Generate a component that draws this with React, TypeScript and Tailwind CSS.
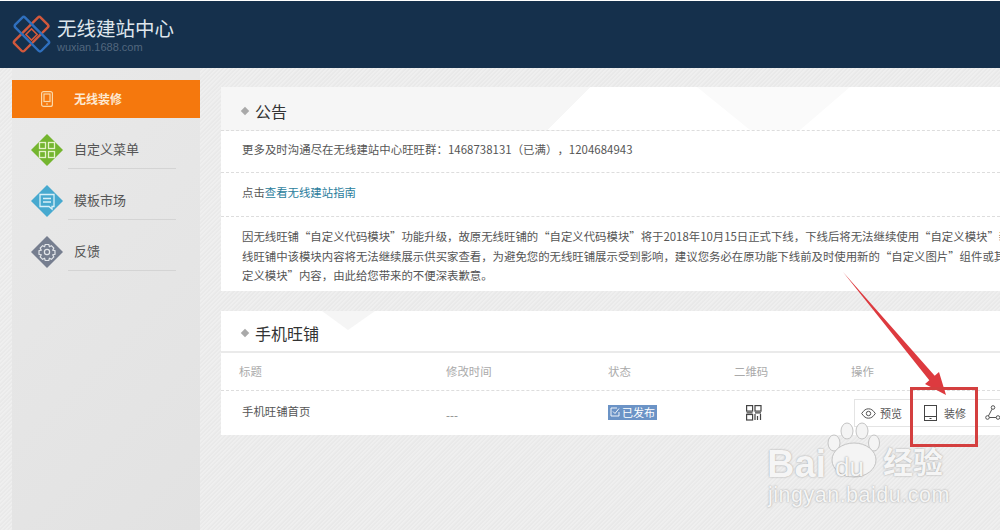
const font = "[font-family:'Noto_Sans_CJK_SC','Liberation_Sans',sans-serif] [text-spacing-trim:space-all]";

function Diamond({ color, children }: { color: string; children: React.ReactNode }) {
  return (
    <svg width="32" height="32" viewBox="0 0 32 32" className="mb-[3px] shrink-0">
      <polygon points="16,0 32,16 16,32 0,16" fill={color} />
      {children}
    </svg>
  );
}

function MenuItem({ label, icon }: { label: string; icon: React.ReactNode }) {
  return (
    <div className="flex h-[51px] items-end pl-[31px]">
      {icon}
      <div className="ml-[5px] flex h-[51px] w-[108px] items-end border-b border-[#d4d4d4] pb-[10px] pl-[6px] text-[13px] leading-[19px] text-[#555]">
        {label}
      </div>
    </div>
  );
}

function CardTitle({ title, className, children }: { title: string; className: string; children?: React.ReactNode }) {
  return (
    <div className={`relative flex items-center pl-[21px] pt-[4px] ${className}`}>
      {children}
      <span className="relative mr-[7px] h-[6px] w-[6px] rotate-45 bg-[#a9a9a9]" />
      <span className="relative text-[16px] leading-[22px] text-[#333]">{title}</span>
    </div>
  );
}

export default function App() {
  return (
    <div className={`relative h-[530px] w-[1000px] overflow-hidden bg-[#ececec] bg-[repeating-linear-gradient(135deg,#efefef_0px,#efefef_1px,#e9e9e9_2px,#e9e9e9_3px)] ${font}`}>
      <div className="h-[1px] bg-white" />
      <header className="flex h-[67px] items-center bg-[#15304c] pl-[11px]">
        <svg width="41" height="41" viewBox="0 0 41 41" fill="none" strokeWidth="2.4">
          <rect x="2" y="13" width="37" height="14" rx="2" transform="rotate(-45 20.5 20.5)" stroke="#d2583c" />
          <rect x="2" y="13" width="37" height="14" rx="2" transform="rotate(45 20.5 20.5)" stroke="#2f6fbd" />
          <rect x="16.5" y="16.5" width="8" height="8" transform="rotate(45 20.5 20.5)" stroke="#d2583c" strokeWidth="1.6" />
        </svg>
        <div className="ml-[5px] mt-[1px]">
          <div className="text-[19.5px] leading-[24px] text-[#dfe6ec] [font-family:'Liberation_Sans','Noto_Sans_CJK_SC',sans-serif]">无线建站中心</div>
          <div className="text-[11px] leading-[12px] text-[#52677e] [font-family:'Liberation_Sans',sans-serif]">wuxian.1688.com</div>
        </div>
      </header>

      <div className="flex h-[462px]">
        <aside className="ml-[12px] h-full w-[188px] shrink-0 bg-[linear-gradient(135deg,#e9e9e9,#e2e2e2)] pt-[12px]">
          <div className="flex h-[38px] items-center bg-[#f5780d] pl-[29px]">
            <svg width="12" height="16" viewBox="0 0 12 16" fill="none" stroke="#fbd9a8" strokeWidth="1.2">
              <rect x="0.6" y="0.6" width="10.8" height="14.8" rx="2" />
              <rect x="3" y="3" width="6" height="7.5" />
              <path d="M5 13h2" />
            </svg>
            <span className="ml-[21px] text-[12px] font-bold text-[#fde9d2]">无线装修</span>
          </div>
          <div className="-ml-[12px]">
            <MenuItem
              label="自定义菜单"
              icon={
                <Diamond color="#74b52f">
                  <g fill="none" stroke="#e4f2c8" strokeWidth="1.3">
                    <rect x="8.5" y="8.5" width="6" height="6" />
                    <rect x="17.5" y="8.5" width="6" height="6" />
                    <rect x="8.5" y="17.5" width="6" height="6" />
                    <rect x="17.5" y="17.5" width="6" height="6" />
                  </g>
                </Diamond>
              }
            />
            <MenuItem
              label="模板市场"
              icon={
                <Diamond color="#47a9cf">
                  <g fill="none" stroke="#d8f0f8" strokeWidth="1.3">
                    <path d="M9 9.5h14v12h-2v2.5l-3-2.5H9z" />
                    <path d="M12 13.5h8M12 17h8" />
                  </g>
                </Diamond>
              }
            />
            <MenuItem
              label="反馈"
              icon={
                <Diamond color="#767e8f">
                  <g fill="none" stroke="#e3e6ea" strokeWidth="1.2">
                    <circle cx="16" cy="16" r="2.6" />
                    <path d="M14.2 8.5h3.6l.6 2.2 2-1 2.4 2.4-1 2 2.2.6v3.6l-2.2.6 1 2-2.4 2.4-2-1-.6 2.2h-3.6l-.6-2.2-2 1-2.4-2.4 1-2-2.2-.6v-3.6l2.2-.6-1-2 2.4-2.4 2 1z" />
                  </g>
                </Diamond>
              }
            />
          </div>
        </aside>

        <main className="ml-[21px] min-w-0 flex-1 pt-[19px]">
          <section className="h-[204px] overflow-hidden bg-white text-[11.4px] text-[#555]">
            <CardTitle title="公告" className="h-[44px] border-b border-dashed border-[#ddd] bg-[linear-gradient(135deg,#f6f6f6_261px,#fff_261px)]">
              {/* 背景三角 */}
              <svg width="153" height="43" viewBox="0 0 153 43" className="absolute left-[476px] top-0">
                <polygon points="0,0 153,0 103,43 53,43" fill="#fafafa" />
              </svg>
            </CardTitle>
            <div className="flex h-[42px] items-center border-b border-dashed border-[#ddd] pb-[4px] pl-[21px] tracking-[0.05px]">
              更多及时沟通尽在无线建站中心旺旺群：1468738131（已满），1204684943
            </div>
            <div className="flex h-[44px] items-center border-b border-dashed border-[#ddd] pb-[3px] pl-[21px]">
              点击<span className="text-[#2a7d9c]">查看无线建站指南</span>
            </div>
            <div className="whitespace-nowrap pl-[21px] pt-[10px] leading-[19.5px]">
              <div>因无线旺铺“自定义代码模块”功能升级，故原无线旺铺的“自定义代码模块”将于2018年10月15日正式下线，下线后将无法继续使用“自定义模块”装</div>
              <div>线旺铺中该模块内容将无法继续展示供买家查看，为避免您的无线旺铺展示受到影响，建议您务必在原功能下线前及时使用新的“自定义图片”组件或其</div>
              <div>定义模块”内容，由此给您带来的不便深表歉意。</div>
            </div>
          </section>

          <section className="mt-[20px] h-[124px] overflow-hidden bg-white text-[11.4px]">
            <CardTitle title="手机旺铺" className="h-[42px] border-b-2 border-[#eaeaea]">
              <svg width="53" height="19" viewBox="0 0 53 19" className="absolute left-[101px] top-0">
                <polygon points="0,0 53,0 26,19" fill="#f5f5f5" />
              </svg>
            </CardTitle>
            <div className="flex h-[38px] items-center border-b border-dashed border-[#ddd] pt-[1px] text-[#aaa]">
              <div className="w-[225px] pl-[18px]">标题</div>
              <div className="w-[162px]">修改时间</div>
              <div className="w-[126px]">状态</div>
              <div className="w-[117px]">二维码</div>
              <div>操作</div>
            </div>
            <div className="flex h-[44px] items-center text-[#555]">
              <div className="w-[225px] pb-[3px] pl-[21px]">手机旺铺首页</div>
              <div className="w-[162px] pt-[6px] text-[#888]">---</div>
              <div className="w-[126px]">
                <span className="inline-flex h-[15px] w-[49px] items-center justify-center gap-[2px] bg-[#6b93c6] text-[11px] text-white">
                  <svg width="10" height="10" viewBox="0 0 10 10" fill="none" stroke="#fff" strokeWidth="0.9">
                    <path d="M9 5v4H1V1h6M3 4.5l2 2 4-5" />
                  </svg>
                  已发布
                </span>
              </div>
              <div className="w-[120px] pl-[12px]">
                <svg width="16" height="16" viewBox="0 0 16 16" fill="none" stroke="#444" strokeWidth="1.2">
                  <rect x="0.6" y="0.6" width="6" height="5.5" />
                  <rect x="9" y="0.6" width="6" height="5.5" />
                  <rect x="0.6" y="9.5" width="6" height="5.5" />
                  <path d="M9 9v6M11.5 11v4M14.5 9v6M0.6 7.8h6M9 7.8h6" />
                </svg>
              </div>
              <div className="flex h-[28px] flex-1 items-center border-y border-l border-[#e4e4e4] pl-[6px] text-[11px] text-[#555]">
                <svg width="15" height="11" viewBox="0 0 15 11" fill="none" stroke="#555" strokeWidth="1" className="shrink-0">
                  <path d="M0.7 5.5C3 2 5 .8 7.5.8S12 2 14.3 5.5C12 9 10 10.2 7.5 10.2S3 9 .7 5.5z" />
                  <circle cx="7.5" cy="5.5" r="2.2" />
                </svg>
                <span className="ml-[4px] shrink-0">预览</span>
                <svg width="13" height="16" viewBox="0 0 13 16" fill="none" stroke="#444" strokeWidth="1" className="ml-[22px] shrink-0">
                  <rect x="0.5" y="0.5" width="12" height="15" />
                  <path d="M0.5 11.5h12M5.5 13.5h2" />
                </svg>
                <span className="ml-[7px] shrink-0">装修</span>
                <svg width="15" height="16" viewBox="0 0 15 16" fill="none" stroke="#555" strokeWidth="1" className="ml-[19px] shrink-0">
                  <circle cx="8" cy="2.5" r="1.8" />
                  <circle cx="2.5" cy="12.5" r="1.8" />
                  <circle cx="13" cy="12.5" r="1.8" />
                  <path d="M7 4.2 3.4 11M4.3 12.5h6.9" />
                </svg>
              </div>
            </div>
          </section>
        </main>
      </div>

      {/* 红色标注 */}
      <svg width="150" height="190" viewBox="0 0 150 190" fill="none" className="absolute left-[835px] top-[265px]">
        <polygon points="8,7 99.7,110.8 104,107 111,130 90,119 94.3,115.2" fill="#dd3a3f" />
      </svg>
      <div className="absolute left-[910px] top-[387px] h-[60px] w-[68px] border-[3px] border-[#d43f3f]" />

      {/* 水印 */}
      <svg width="56" height="58" viewBox="0 0 56 58" className="absolute left-[826px] top-[422px]" fill="#f4f4f4" stroke="#c4c4c4">
        <ellipse cx="8" cy="21" rx="6" ry="8" />
        <ellipse cx="21" cy="9" rx="6" ry="8" />
        <ellipse cx="36" cy="9" rx="6" ry="8" />
        <ellipse cx="48" cy="21" rx="5.5" ry="8" />
        <ellipse cx="28" cy="38" rx="22" ry="17" />
      </svg>
      <div className="absolute left-[767px] top-[447px] [font-family:'Liberation_Sans'] text-[38px] font-bold leading-[34px] text-[#f5f5f5] [text-shadow:0_0_2px_#999]">
        Bai
      </div>
      <div className="absolute left-[835px] top-[452px] [font-family:'Liberation_Sans'] text-[26px] leading-[30px] text-[#f5f5f5] [text-shadow:0_0_2px_#888]">
        du
      </div>
      <div className="absolute left-[883px] top-[446px] [font-family:'Liberation_Sans','Noto_Sans_CJK_SC'] text-[30px] font-bold leading-[34px] text-[#f5f5f5] [text-shadow:0_0_2px_#999]">
        经验
      </div>
      <div className="absolute left-[768px] top-[483px] [font-family:'Liberation_Sans'] text-[21.5px] leading-[24px] tracking-[0.5px] text-[#f5f5f5] [text-shadow:0_0_2px_#999]">
        jingyan.baidu.com
      </div>
    </div>
  );
}
